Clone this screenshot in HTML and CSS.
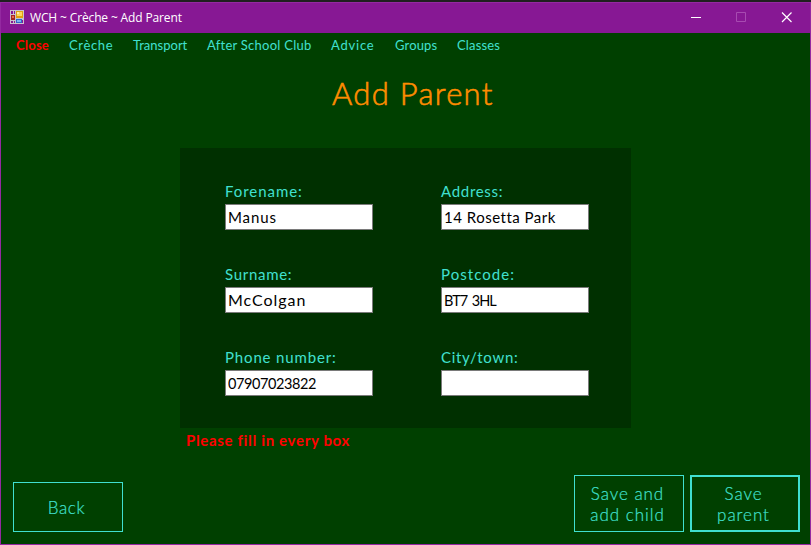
FILE: index.html
```html
<!DOCTYPE html>
<html lang="en">
<head>
<meta charset="utf-8">
<title>WCH ~ Crèche ~ Add Parent</title>
<link rel="stylesheet" href="styles.css">
</head>
<body>
<div class="window">
  <header class="titlebar">
    <svg class="app-icon" width="14" height="14" viewBox="0 0 14 14" shape-rendering="crispEdges">
      <path fill="#c9c3cd" d="M0 0h14v14H0z"/>
      <path fill="#871894" d="M1 1h2v3H1zM4 1h1v3H4zM1 11h2v2H1zM4 11h1v2H4zM12 10h1v3h-1z"/>
      <path fill="#a32a20" d="M1 5h4v5H1z"/><path fill="#e96a4d" d="M2 6h2v2H2z"/>
      <path fill="#e0a010" d="M6 1h7v7H6z"/><path fill="#ffd65a" d="M7 2h5v4H7z"/><path fill="#fff0a5" d="M7 2h2v2H7z"/>
      <path fill="#3268c8" d="M6 9h6v4H6z"/><path fill="#79b3f2" d="M7 10h4v2H7z"/>
    </svg>
    <span class="caption">WCH ~ Crèche ~ Add Parent</span>
    <svg class="controls" width="138" height="30" viewBox="0 0 138 30" fill="none">
      <path d="M19 14.5h10" stroke="#fff"/>
      <path d="M64.500 9.500h9v9h-9z" stroke="#a74bb1"/>
      <path d="M110 9.500l9.500 9.500M119.500 9.500l-9.500 9.500" stroke="#fff" stroke-width="1.200"/>
    </svg>
  </header>
  <nav class="menu">
    <a class="close">Close</a><a class="creche">Crèche</a><a class="transport">Transport</a><a class="club">After School Club</a><a class="advice">Advice</a><a class="groups">Groups</a><a class="classes">Classes</a>
  </nav>
  <h1>Add Parent</h1>
  <form class="panel">
    <label><span class="forename">Forename:</span><input class="v-manus" value="Manus"></label>
    <label><span class="address">Address:</span><input class="v-street" value="14 Rosetta Park"></label>
    <label><span class="surname">Surname:</span><input class="v-mccolgan" value="McColgan"></label>
    <label><span class="postcode">Postcode:</span><input class="v-postcode" value="BT7 3HL"></label>
    <label><span class="phone">Phone number:</span><input class="v-phone" value="07907023822"></label>
    <label><span class="city">City/town:</span><input value=""></label>
  </form>
  <p class="error">Please fill in every box</p>
  <footer class="actions">
    <button class="back">Back</button>
    <button class="save-child">Save and<br>add child</button>
    <button class="save-parent">Save<br>parent</button>
  </footer>
</div>
</body>
</html>
```
FILE: styles.css
```css
* { box-sizing: border-box; }
body {
  margin: 0;
  background: #1f1f1f;
  font-family: "Century Gothic", Lato, sans-serif;
  font-variant-ligatures: none;
  color: #40e0d0;
}
.window {
  height: 543px;
  margin-top: 2px;
  border: 1px solid #9429a1;
  background: #004000;
  display: flex;
  flex-direction: column;
  white-space: nowrap;
}
.titlebar {
  height: 30px;
  flex: none;
  display: flex;
  align-items: center;
  padding-left: 9px;
  background: #871894;
}
.app-icon { margin-top: -2px; }
.caption {
  margin: -1px 0 0 6px;
  font: 12px "Segoe UI", "Open Sans", sans-serif;
  letter-spacing: -0.14px;
  color: #fff;
}
.controls { margin-left: auto; }
.menu {
  display: grid;
  grid-template-columns: 52px 64px 74px 124px 64px 62px 60px;
  height: 26px;
  padding-left: 16px;
  font-size: 13px;
  line-height: 25px;
}
.menu .close { margin-left: -1px; color: #f00; font-weight: 700; letter-spacing: 0.2px; }
.menu .creche { letter-spacing: 0.65px; }
.menu .club { letter-spacing: 0.25px; }
.menu .advice { letter-spacing: 0.8px; }
.menu .groups, .menu .classes { letter-spacing: 0.15px; }
h1 {
  margin: 14px 0 0 331px;
  height: 40px;
  font-size: 31px;
  line-height: 40px;
  font-weight: 300;
  letter-spacing: 1.3px;
  -webkit-text-stroke: 0.6px #ff8c00;
  color: #ff8c00;
}
.panel {
  width: 451px;
  height: 280px;
  flex: none;
  margin: 35px 0 0 179px;
  padding: 33px 0 0 45px;
  background: #003000;
  display: grid;
  grid-template-columns: 148px 148px;
  grid-auto-rows: 83px;
  column-gap: 68px;
  align-content: start;
}
.panel label { display: flex; flex-direction: column; }
.panel span {
  height: 23px;
  font-size: 15px;
  line-height: 21px;
  letter-spacing: 0.7px;
}
.panel .forename { letter-spacing: 0.95px; }
.panel .postcode { letter-spacing: 1.05px; }
.panel .phone { letter-spacing: 0.85px; }
.panel input {
  width: 148px;
  height: 26px;
  padding: 0 2px;
  border: 1px solid #7a7a7a;
  border-radius: 0;
  outline: 0;
  background: #fff;
  color: #000;
  font: 15px "Century Gothic", Lato, sans-serif;
  font-variant-ligatures: none;
}
.panel .v-manus { letter-spacing: 0.9px; }
.panel .v-street { letter-spacing: 0.5px; }
.panel .v-mccolgan { padding-bottom: 2px; font-size: 16px; letter-spacing: 0.95px; }
.panel .v-postcode { font-size: 14.500px; letter-spacing: -1px; word-spacing: 2px; }
.panel .v-phone { font-size: 14.500px; letter-spacing: -0.4px; }
.error {
  margin: 1px 0 0 185px;
  height: 23px;
  font-size: 15px;
  line-height: 22px;
  font-weight: 700;
  letter-spacing: 0.67px;
  color: #f00;
}
.actions {
  display: flex;
  align-items: flex-end;
  gap: 6px;
  height: 57px;
  margin: 23px 10px 0 12px;
}
.actions button {
  width: 110px;
  height: 57px;
  padding: 0 3px 0 0;
  border: 1px solid #40e0d0;
  background: transparent;
  color: #40e0d0;
  font: 300 17px/21px "Century Gothic", Lato, sans-serif;
  letter-spacing: 0.95px;
  -webkit-text-stroke: 0.2px #40e0d0;
}
.actions .back { height: 50px; margin-right: auto; letter-spacing: 0.6px; }
.actions .save-parent { border-width: 2px; }
```
